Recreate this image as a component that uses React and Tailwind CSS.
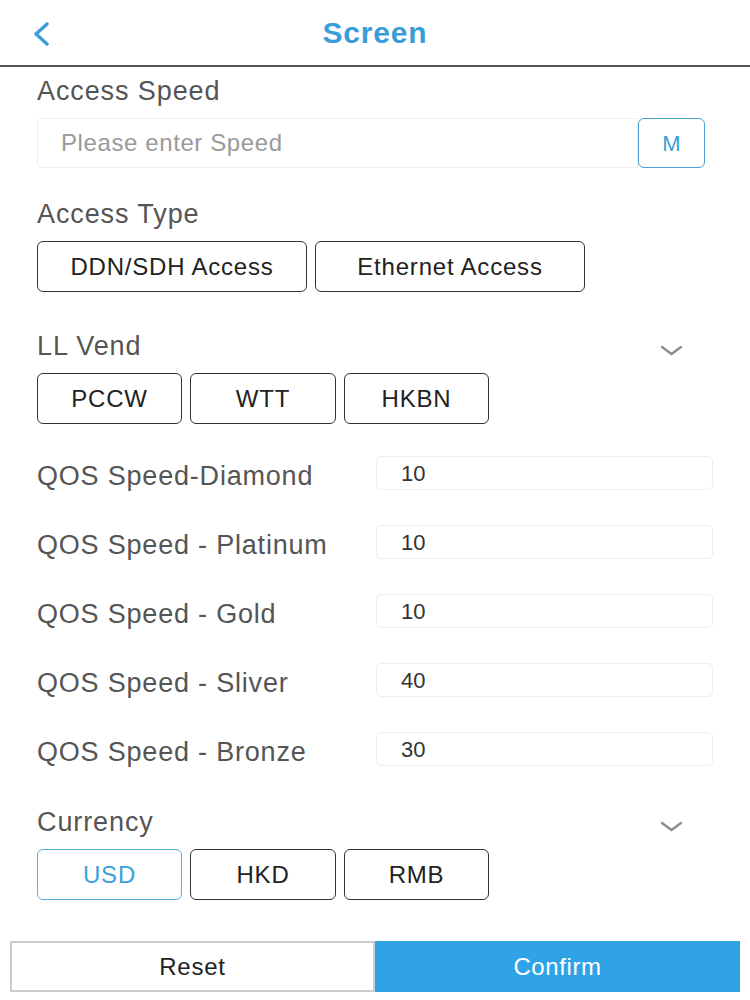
import React from "react";

const font = { fontFamily: '"Liberation Sans", Arial, sans-serif' };

const qos = [
  { label: "QOS Speed-Diamond", value: "10" },
  { label: "QOS Speed - Platinum", value: "10" },
  { label: "QOS Speed - Gold", value: "10" },
  { label: "QOS Speed - Sliver", value: "40" },
  { label: "QOS Speed - Bronze", value: "30" },
];

const ChevronDown = () => (
  <svg width="23" height="12" viewBox="0 0 23 12" className="mr-[30px] mt-[17px]">
    <path d="M2 2 L11.5 9 L21 2" fill="none" stroke="#8a8a8a" strokeWidth="2.2" strokeLinecap="round" strokeLinejoin="round" />
  </svg>
);

const Option = ({ label, w, active }) => (
  <button
    className={
      "h-[51px] rounded-[6px] border-[1.5px] bg-white text-[24px] tracking-[0.8px] " +
      (active ? "border-[#5aaee0] text-[#3aa0dc]" : "border-[#333] text-[#222]") +
      " " +
      w
    }
  >
    {label}
  </button>
);

const Label = ({ children }) => (
  <div className="h-[36px] leading-[36px] text-[27px] tracking-[0.9px] text-[#555]">{children}</div>
);

export default function App() {
  return (
    <div className="w-[750px] h-[1000px] bg-white overflow-hidden" style={font}>
      <header className="h-[67px] border-b-2 border-[#555] flex items-center relative">
        <svg width="18" height="24" viewBox="0 0 18 24" className="absolute left-[32px] top-[22px]">
          <path d="M15 2 L4 12 L15 22" fill="none" stroke="#3b9cd9" strokeWidth="3.4" strokeLinecap="round" strokeLinejoin="round" />
        </svg>
        <div className="w-full text-center text-[30px] font-bold text-[#3a9dd9] tracking-[0.8px] -mt-[1px]">
          Screen
        </div>
      </header>

      <div className="px-[37px]">
        <div className="mt-[6px]">
          <Label>Access Speed</Label>
        </div>
        <div className="mt-[9px] flex h-[50px]">
          <div className="w-[601px] h-full border border-[#eeeeee] rounded-l-[5px] flex items-center pl-[23px] text-[24px] tracking-[0.6px] text-[#9a9a9a]">
            Please enter Speed
          </div>
          <button className="w-[67px] h-full border-[1.5px] border-[#4a9fd3] rounded-[6px] text-[22px] text-[#3a9dd9] bg-white">
            M
          </button>
        </div>

        <div className="mt-[28px]">
          <Label>Access Type</Label>
        </div>
        <div className="mt-[9px] flex gap-[8px]">
          <Option label="DDN/SDH Access" w="w-[270px]" />
          <Option label="Ethernet Access" w="w-[270px]" />
        </div>

        <div className="mt-[36px] flex justify-between items-start">
          <Label>LL Vend</Label>
          <ChevronDown />
        </div>
        <div className="mt-[9px] flex gap-[8px]">
          <Option label="PCCW" w="w-[145px]" />
          <Option label="WTT" w="w-[146px]" />
          <Option label="HKBN" w="w-[145px]" />
        </div>

        <div className="mt-[32px] flex flex-col gap-[35px]">
          {qos.map((q) => (
            <div key={q.label} className="flex h-[34px]">
              <div className="w-[339px] text-[27px] tracking-[0.8px] text-[#555] leading-[34px] pt-[3px] whitespace-nowrap">
                {q.label}
              </div>
              <div className="flex-1 h-full border border-[#eeeeee] rounded-[5px] flex items-center pl-[24px] text-[22px] text-[#333]">
                {q.value}
              </div>
            </div>
          ))}
        </div>

        <div className="mt-[38px] flex justify-between items-start">
          <Label>Currency</Label>
          <ChevronDown />
        </div>
        <div className="mt-[9px] flex gap-[8px]">
          <Option label="USD" w="w-[145px]" active />
          <Option label="HKD" w="w-[146px]" />
          <Option label="RMB" w="w-[145px]" />
        </div>
      </div>

      <div className="mt-[41px] px-[10px] flex h-[51px]">
        <button className="w-[365px] h-full border-2 border-[#cccccc] bg-white text-[24px] tracking-[0.8px] text-[#222]">
          Reset
        </button>
        <button className="w-[365px] h-full bg-[#2fa3e6] text-[24px] tracking-[0.6px] text-white">
          Confirm
        </button>
      </div>
    </div>
  );
}
